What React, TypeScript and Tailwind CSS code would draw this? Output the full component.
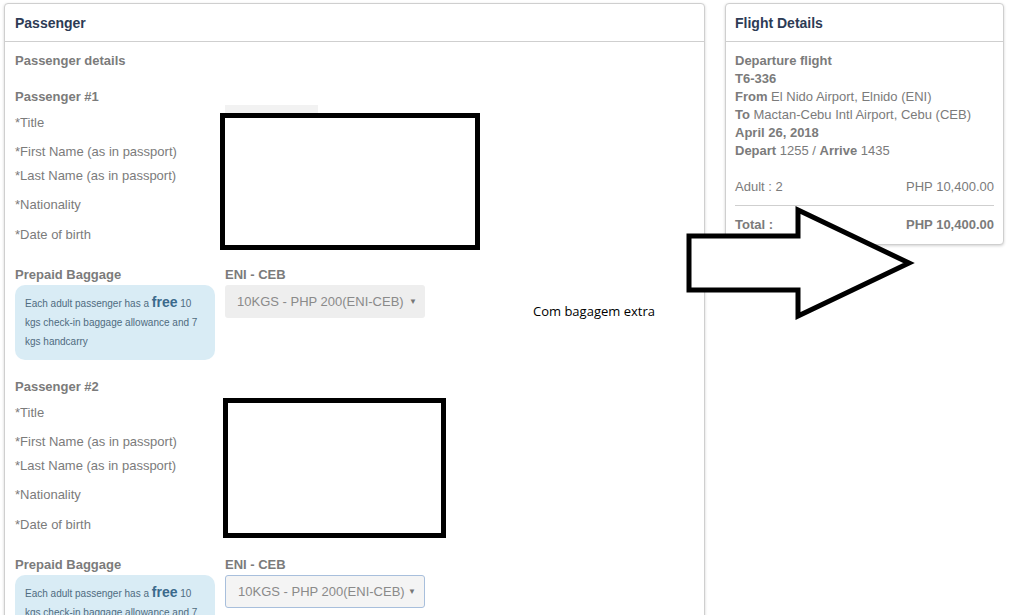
import React from 'react'

const labelRows: { text: string; h: string }[] = [
  { text: '*Title', h: 'h-[29px]' },
  { text: '*First Name (as in passport)', h: 'h-[24px]' },
  { text: '*Last Name (as in passport)', h: 'h-[29px]' },
  { text: '*Nationality', h: 'h-[30px]' },
  { text: '*Date of birth', h: 'h-[40px]' },
]

function BaggageSelect({ focused }: { focused?: boolean }) {
  return (
    <div
      className={
        'flex h-[33px] w-[200px] items-center justify-between whitespace-nowrap rounded-[3px] pl-[12px] pr-[8px] text-[13px] text-[#8a8a8a] ' +
        (focused ? 'border border-[#a8bfdc] bg-[#f4f4f4]' : 'bg-[#eeeeee]')
      }
    >
      <span>10KGS - PHP 200(ENI-CEB)</span>
      <span className="text-[8px] text-[#777]">▼</span>
    </div>
  )
}

function PassengerBlock({ n, focused }: { n: number; focused?: boolean }) {
  return (
    <div>
      <div className="h-[26px] font-bold leading-5">Passenger #{n}</div>
      {labelRows.map((r) => (
        <div key={r.text} className={r.h + ' leading-5'}>
          {r.text}
        </div>
      ))}
      <div className="flex gap-[10px]">
        <div className="w-[200px]">
          <div className="h-[20px] font-bold leading-5">Prepaid Baggage</div>
          <div className="h-[75px] rounded-[10px] bg-[#d9ecf5] px-[10px] pt-[9px] text-[10px] leading-[19px] text-[#4f6b80]">
            Each adult passenger has a{' '}
            <span className="text-[14px] font-bold leading-none text-[#3a6a8c]">free</span> 10 kgs check-in baggage
            allowance and 7 kgs handcarry
          </div>
        </div>
        <div>
          <div className="h-[20px] font-bold leading-5">ENI - CEB</div>
          <BaggageSelect focused={focused} />
        </div>
      </div>
    </div>
  )
}

function FlightDetails() {
  return (
    <div className="h-[242px] w-[279px] rounded-[4px] border border-[#cfcfcf] bg-white shadow-[0_1px_3px_rgba(0,0,0,0.18)]">
      <div className="h-[38px] border-b border-[#cfcfcf] px-[9px] pt-[9px] text-[14px] font-bold text-[#2d3b55]">
        Flight Details
      </div>
      <div className="px-[9px] pt-[10px] text-[13px] leading-[18px] text-[#7b7b7b]">
        <div className="font-bold">Departure flight</div>
        <div className="font-bold">T6-336</div>
        <div>
          <b>From</b> El Nido Airport, Elnido (ENI)
        </div>
        <div>
          <b>To</b> Mactan-Cebu Intl Airport, Cebu (CEB)
        </div>
        <div className="font-bold">April 26, 2018</div>
        <div>
          <b>Depart</b> 1255 / <b>Arrive</b> 1435
        </div>
        <div className="mt-[18px] flex h-[28px] justify-between border-b border-[#cfcfcf]">
          <span>Adult : 2</span>
          <span>PHP 10,400.00</span>
        </div>
        <div className="flex justify-between pt-[10px] font-bold">
          <span>Total :</span>
          <span>PHP 10,400.00</span>
        </div>
      </div>
    </div>
  )
}

export default function App() {
  return (
    <div
      className="relative h-[615px] w-[1018px] overflow-hidden bg-white"
      style={{ fontFamily: '"Liberation Sans", Arial, sans-serif' }}
    >
      <div className="flex items-start gap-[20px] pl-[4px] pt-[3px]">
        {/* passenger form */}
        <div className="h-[660px] w-[701px] rounded-[4px] border border-[#cfcfcf] bg-white shadow-[0_1px_3px_rgba(0,0,0,0.18)]">
          <div className="h-[38px] border-b border-[#cfcfcf] px-[10px] pt-[9px] text-[14px] font-bold text-[#2d3b55]">
            Passenger
          </div>
          <div className="px-[10px] pt-[9px] text-[13px] text-[#7b7b7b]">
            <div className="h-[36px] font-bold leading-5">Passenger details</div>
            <PassengerBlock n={1} />
            <div className="h-[17px]" />
            <PassengerBlock n={2} focused />
          </div>
        </div>
        <FlightDetails />
      </div>

      {/* redacted fields */}
      <div className="absolute left-[225px] top-[105px] h-[10px] w-[93px] bg-[#f2f2f2]" />
      <div className="absolute left-[220px] top-[113px] h-[137px] w-[260px] border-[5px] border-black bg-white" />
      <div className="absolute left-[223px] top-[398px] h-[140px] w-[223px] border-[5px] border-black bg-white" />

      {/* annotation */}
      <div
        className="absolute left-[533px] top-[302px] text-[13px] text-black"
        style={{ fontFamily: '"Open Sans", sans-serif' }}
      >
        Com bagagem extra
      </div>
      <svg className="absolute left-0 top-0" width="1018" height="615" viewBox="0 0 1018 615">
        <polygon
          points="689,236 798,236 798,210 909,263 798,316 798,290 689,290"
          fill="white"
          stroke="black"
          strokeWidth="5"
          strokeLinejoin="miter"
        />
      </svg>
    </div>
  )
}
